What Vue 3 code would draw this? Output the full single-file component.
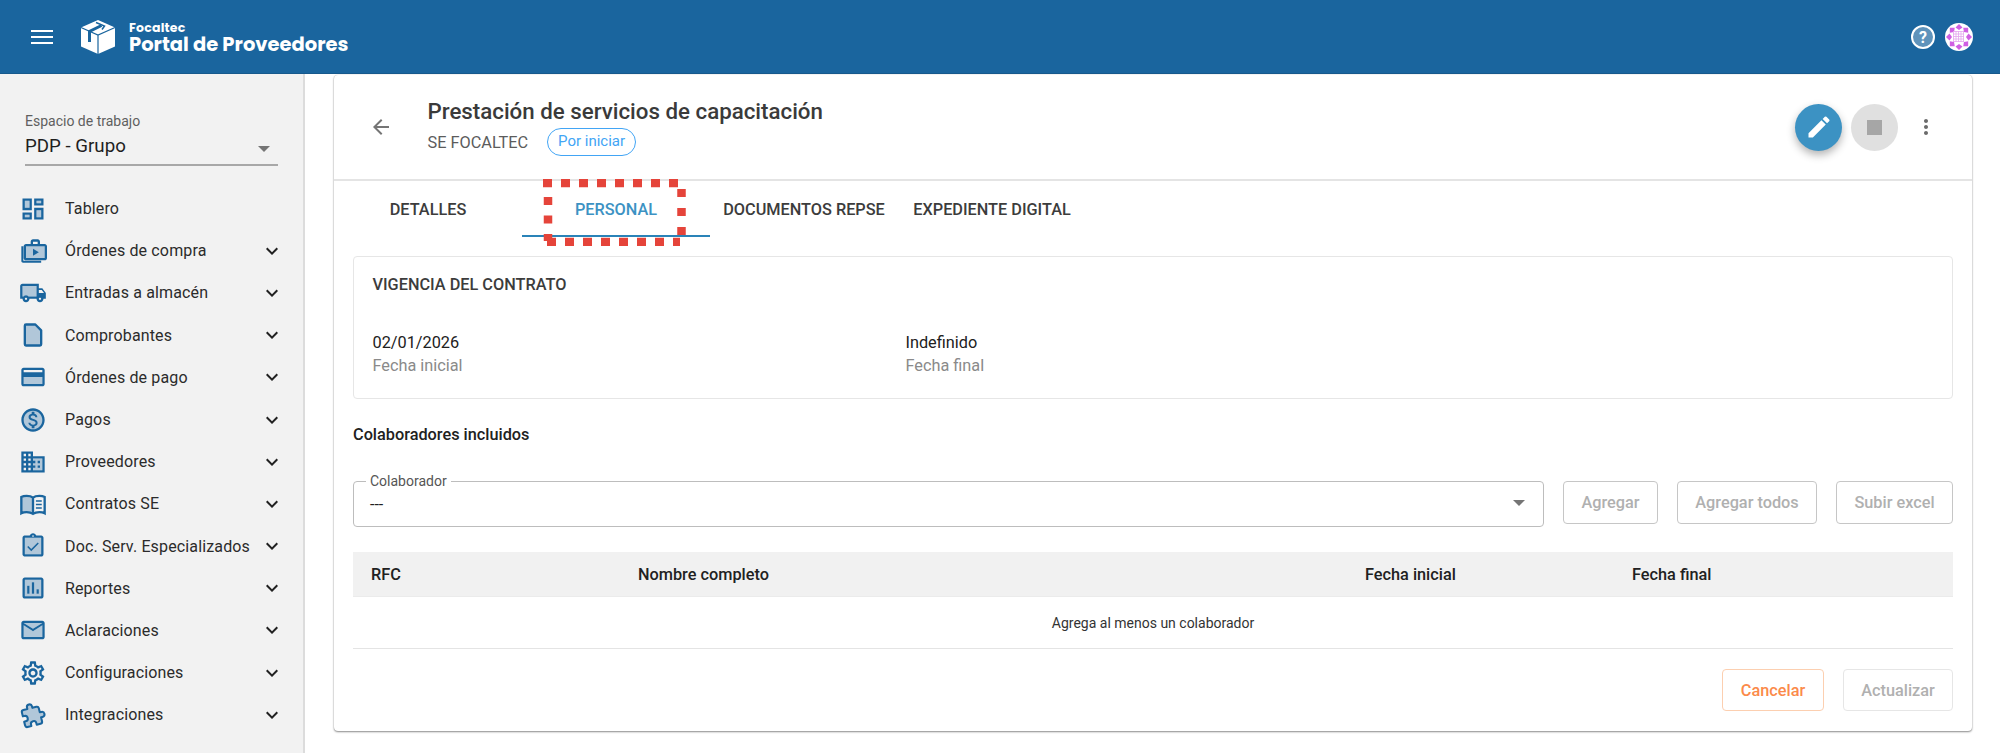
<script setup>
const nav = [
  { label: 'Tablero', icon: 'dash', leaf: true },
  { label: 'Órdenes de compra', icon: 'work' },
  { label: 'Entradas a almacén', icon: 'truck' },
  { label: 'Comprobantes', icon: 'doc' },
  { label: 'Órdenes de pago', icon: 'card' },
  { label: 'Pagos', icon: 'money' },
  { label: 'Proveedores', icon: 'domain' },
  { label: 'Contratos SE', icon: 'book' },
  { label: 'Doc. Serv. Especializados', icon: 'check' },
  { label: 'Reportes', icon: 'report' },
  { label: 'Aclaraciones', icon: 'mail' },
  { label: 'Configuraciones', icon: 'gear' },
  { label: 'Integraciones', icon: 'ext' }
]
const tabs = ['DETALLES', 'PERSONAL', 'DOCUMENTOS REPSE', 'EXPEDIENTE DIGITAL']
const cols = ['RFC', 'Nombre completo', 'Fecha inicial', 'Fecha final']
const petals = [0, 45, 90, 135, 180, 225, 270, 315]
const grid = [6.500, 9, 11.500, 14, 16.500]
</script>

<template>
  <div class="page">
    <header class="topbar">
      <svg class="burger" viewBox="0 0 22 14" width="22" height="14"><path d="M0 1h22M0 7h22M0 13h22" stroke="#fff" stroke-width="2"/></svg>
      <svg class="logo" viewBox="0 0 36 36" width="36" height="36">
        <path d="M18 1 35 8.500v19L18 35 1 27.500v-19z" fill="#fff"/>
        <path d="M1 8.500 18 16 35 8.500M18 16v19" stroke="#1a659e" stroke-width="1.200" fill="none"/>
        <path d="M9.500 23V12.500L21.500 6.500" stroke="#1a659e" stroke-width="3" fill="none"/>
        <path d="M16 3.500 24.500 7 22 10.500" stroke="#1a659e" stroke-width="1.500" fill="none"/>
      </svg>
      <div class="brand">
        <div class="brand-small">Focaltec</div>
        <div class="brand-big">Portal de Proveedores</div>
      </div>
      <div class="top-right">
        <svg viewBox="0 0 24 24" width="24" height="24">
          <circle cx="12" cy="12" r="11" fill="#fff" fill-opacity=".3" stroke="#fff" stroke-width="2"/>
          <text x="12" y="17.500" text-anchor="middle" class="q">?</text>
        </svg>
        <svg viewBox="0 0 28 28" width="28" height="28">
          <circle cx="14" cy="14" r="14" fill="#fff"/>
          <g transform="translate(2 2)">
            <path v-for="a in petals" :key="a" :transform="`rotate(${a} 12 12)`" d="M12 -1 15.500 2.500 12 5 8.500 2.500z" fill="#cf5fe3"/>
            <path v-for="g in grid" :key="'v' + g" :d="`M${g} 6V17M6 ${g}H17`" stroke="#e3a6ef" stroke-width=".8"/>
          </g>
        </svg>
      </div>
    </header>

    <div class="body">
      <aside class="sidebar">
        <div class="workspace">
          <div class="ws-label">Espacio de trabajo</div>
          <div class="ws-value">
            <span>PDP - Grupo</span>
            <i class="caret"></i>
          </div>
        </div>
        <nav class="nav">
          <div v-for="item in nav" :key="item.label" class="nav-row">
            <svg class="nav-icon" viewBox="0 0 24 24" width="28" height="28">
              <template v-if="item.icon === 'dash'">
                <path class="tone" d="M5 5h4v6H5zm10 8h4v6h-4zM5 17h4v2H5zM15 5h4v2h-4z"/>
                <path d="M3 13h8V3H3v10zm2-8h4v6H5V5zm8 16h8V11h-8v10zm2-8h4v6h-4v-6zM13 3v6h8V3h-8zm6 4h-4V5h4v2zM3 21h8v-6H3v6zm2-4h4v2H5v-2z"/>
              </template>
              <template v-else-if="item.icon === 'work'">
                <path class="tone" d="M6 7h16v11H6z"/>
                <path d="M2 8v12.500c0 .8.7 1.500 1.500 1.500H19v-1.700H3.700V8zM22 6h-4V4c0-1-.9-2-2-2h-4c-1.100 0-2 1-2 2v2H6c-1.100 0-2 .9-2 2v10c0 1.100.9 2 2 2h16c1.100 0 2-.9 2-2V8c0-1.100-.9-2-2-2zM12 4h4v2h-4zm10 14H6V8h16z"/>
                <path d="M12 10v6l5-3z"/>
              </template>
              <template v-else-if="item.icon === 'truck'">
                <path class="tone" d="M3 6h12v9H8.200C7.700 14.400 6.900 14 6 14s-1.700.4-2.200 1H3z"/>
                <path d="M20 8h-3V4H3c-1.100 0-2 .9-2 2v11h2c0 1.660 1.340 3 3 3s3-1.340 3-3h6c0 1.660 1.340 3 3 3s3-1.340 3-3h2v-5l-3-4zm-.5 1.500 1.960 2.500H17V9.500h2.500zM6 18c-.55 0-1-.45-1-1s.45-1 1-1 1 .45 1 1-.45 1-1 1zm2.220-3c-.55-.61-1.330-1-2.220-1s-1.670.39-2.220 1H3V6h12v9H8.220zM18 18c-.55 0-1-.45-1-1s.45-1 1-1 1 .45 1 1-.45 1-1 1z"/>
              </template>
              <template v-else-if="item.icon === 'doc'">
                <path class="tone stroked" d="M6 3h8l5 5v12a1 1 0 0 1-1 1H6a1 1 0 0 1-1-1V4a1 1 0 0 1 1-1z"/>
              </template>
              <template v-else-if="item.icon === 'card'">
                <path class="tone" d="M4 12h16v6H4z"/>
                <path d="M20 4H4c-1.110 0-1.990.89-1.990 2L2 18c0 1.110.89 2 2 2h16c1.110 0 2-.89 2-2V6c0-1.110-.89-2-2-2zm0 14H4v-6h16v6zm0-10H4V6h16v2z"/>
              </template>
              <template v-else-if="item.icon === 'money'">
                <circle class="tone" cx="12" cy="12" r="9"/>
                <path d="M12 2C6.480 2 2 6.480 2 12s4.480 10 10 10 10-4.480 10-10S17.520 2 12 2zm0 18c-4.410 0-8-3.590-8-8s3.590-8 8-8 8 3.590 8 8-3.590 8-8 8z"/>
                <path d="M12.310 11.140c-1.770-.45-2.340-.94-2.340-1.670 0-.84.79-1.430 2.100-1.430 1.380 0 1.900.66 1.940 1.640h1.710c-.05-1.340-.87-2.570-2.490-2.970V5H10.900v1.690c-1.510.32-2.720 1.300-2.720 2.810 0 1.790 1.490 2.690 3.660 3.210 1.950.46 2.340 1.150 2.340 1.870 0 .53-.39 1.390-2.100 1.390-1.600 0-2.230-.72-2.320-1.640H8.040c.1 1.700 1.360 2.660 2.860 2.970V19h2.340v-1.670c1.520-.29 2.720-1.160 2.730-2.770-.01-2.200-1.900-2.960-3.660-3.420z"/>
              </template>
              <template v-else-if="item.icon === 'domain'">
                <path class="tone" d="M12 9h8v10h-8z"/>
                <path d="M12 7V3H2v18h20V7H12zM6 19H4v-2h2v2zm0-4H4v-2h2v2zm0-4H4V9h2v2zm0-4H4V5h2v2zm4 12H8v-2h2v2zm0-4H8v-2h2v2zm0-4H8V9h2v2zm0-4H8V5h2v2zm10 12h-8v-2h2v-2h-2v-2h2v-2h-2V9h8v10zm-2-8h-2v2h2v-2zm0 4h-2v2h2v-2z"/>
              </template>
              <template v-else-if="item.icon === 'book'">
                <path class="tone" d="M12 6.500C10.500 5.300 8.500 5 6.500 5 4.800 5 3.200 5.300 2 6v14c1.300-.7 2.900-1 4.500-1 2 0 4 .4 5.500 1.500z"/>
                <path class="line" d="M12 6.500C10.500 5.300 8.500 5 6.500 5 4.800 5 3.200 5.300 2 6v14c1.300-.7 2.900-1 4.500-1 2 0 4 .4 5.500 1.500 1.500-1.100 3.500-1.500 5.500-1.500 1.600 0 3.200.3 4.500 1V6c-1.200-.7-2.800-1-4.500-1-2 0-4 .3-5.500 1.500zM12 6.500v14"/>
                <path class="line thin" d="M14.500 9.500h5M14.500 12.500h5M14.500 15.500h5"/>
              </template>
              <template v-else-if="item.icon === 'check'">
                <path class="tone" d="M5 5h14v14H5z"/>
                <path d="M19 3h-4.180C14.400 1.840 13.300 1 12 1c-1.300 0-2.400.84-2.820 2H5c-.14 0-.27.01-.4.04-.39.08-.74.28-1.010.55-.18.18-.33.4-.43.64-.1.23-.16.49-.16.77v14c0 .27.06.54.16.78s.25.45.43.64c.27.27.62.47 1.010.55.13.02.26.03.4.03h14c1.100 0 2-.9 2-2V5c0-1.100-.9-2-2-2zm-7-.25c.41 0 .75.34.75.75s-.34.75-.75.75-.75-.34-.75-.75.34-.75.75-.75zM19 19H5V5h14v14z"/>
                <path class="line thin" d="m7.500 12.500 3 3 6-6"/>
              </template>
              <template v-else-if="item.icon === 'report'">
                <path class="tone" d="M5 5v14h14V5H5zm4 12H7v-7h2v7zm4 0h-2V7h2v10zm4 0h-2v-4h2v4z"/>
                <path d="M3 5v14c0 1.100.9 2 2 2h14c1.100 0 2-.9 2-2V5c0-1.100-.9-2-2-2H5c-1.100 0-2 .9-2 2zm2 0h14v14H5V5zm2 5h2v7H7zm4-3h2v10h-2zm4 6h2v4h-2z"/>
              </template>
              <template v-else-if="item.icon === 'mail'">
                <path class="tone" d="M20 6H4l8 4.990zM4 8v10h16V8l-8 5z"/>
                <path d="M20 4H4c-1.100 0-2 .9-2 2v12c0 1.100.9 2 2 2h16c1.100 0 2-.9 2-2V6c0-1.100-.9-2-2-2zm0 2-8 4.990L4 6h16zm0 12H4V8l8 5 8-5v10z"/>
              </template>
              <template v-else-if="item.icon === 'gear'">
                <path d="M19.430 12.980c.04-.32.07-.64.07-.98 0-.34-.03-.66-.07-.98l2.110-1.650c.19-.15.24-.42.12-.64l-2-3.460c-.09-.16-.26-.25-.44-.25-.06 0-.12.01-.17.03l-2.490 1c-.52-.4-1.080-.73-1.690-.98l-.38-2.650C14.460 2.180 14.250 2 14 2h-4c-.25 0-.46.18-.49.42l-.38 2.650c-.61.25-1.170.59-1.690.98l-2.490-1c-.06-.02-.12-.03-.18-.03-.17 0-.34.09-.43.25l-2 3.460c-.13.22-.07.49.12.64l2.110 1.650c-.04.32-.07.65-.07.98 0 .33.03.66.07.98l-2.110 1.650c-.19.15-.24.42-.12.64l2 3.460c.09.16.26.25.44.25.06 0 .12-.01.17-.03l2.490-1c.52.4 1.080.73 1.690.98l.38 2.650c.03.24.24.42.49.42h4c.25 0 .46-.18.49-.42l.38-2.650c.61-.25 1.170-.59 1.690-.98l2.490 1c.06.02.12.03.18.03.17 0 .34-.09.43-.25l2-3.460c.12-.22.07-.49-.12-.64l-2.110-1.650zm-1.980-1.710c.04.31.05.52.05.73 0 .21-.02.43-.05.73l-.14 1.130.89.7 1.080.84-.7 1.210-1.270-.51-1.040-.42-.9.68c-.43.32-.84.56-1.250.73l-1.060.43-.16 1.130-.2 1.350h-1.400l-.19-1.350-.16-1.130-1.060-.43c-.43-.18-.83-.41-1.230-.71l-.91-.7-1.060.43-1.270.51-.7-1.210 1.080-.84.89-.7-.14-1.130c-.03-.31-.05-.54-.05-.74s.02-.43.05-.73l.14-1.130-.89-.7-1.080-.84.7-1.210 1.270.51 1.040.42.9-.68c.43-.32.84-.56 1.250-.73l1.060-.43.16-1.130.2-1.350h1.390l.19 1.350.16 1.130 1.060.43c.43.18.83.41 1.230.71l.91.7 1.060-.43 1.270-.51.7 1.210-1.070.85-.89.7.14 1.130zM12 8c-2.210 0-4 1.790-4 4s1.790 4 4 4 4-1.790 4-4-1.790-4-4-4zm0 6c-1.100 0-2-.9-2-2s.9-2 2-2 2 .9 2 2-.9 2-2 2z"/>
              </template>
              <template v-else>
                <path class="tone stroked" transform="rotate(-14 12 12) translate(1.500 1.500) scale(.88)" d="M20.500 11H19V7c0-1.100-.9-2-2-2h-4V3.500C13 2.120 11.880 1 10.500 1S8 2.120 8 3.500V5H4c-1.100 0-1.990.9-1.990 2v3.800H3.500c1.490 0 2.700 1.210 2.700 2.700s-1.210 2.700-2.700 2.700H2V20c0 1.100.9 2 2 2h3.800v-1.500c0-1.490 1.210-2.700 2.700-2.700 1.490 0 2.700 1.210 2.700 2.700V22H17c1.100 0 2-.9 2-2v-4h1.500c1.380 0 2.500-1.120 2.500-2.500S21.880 11 20.500 11z"/>
              </template>
            </svg>
            <span class="nav-label">{{ item.label }}</span>
            <svg v-if="!item.leaf" class="chev" viewBox="0 0 24 24" width="24" height="24"><path d="M16.590 8.590 12 13.170 7.410 8.590 6 10l6 6 6-6z"/></svg>
          </div>
        </nav>
      </aside>

      <main class="main">
        <section class="card">
          <div class="card-head">
            <svg class="back" viewBox="0 0 24 24" width="24" height="24"><path d="M20 11H7.830l5.590-5.590L12 4l-8 8 8 8 1.410-1.410L7.830 13H20z"/></svg>
            <div class="head-text">
              <h1>Prestación de servicios de capacitación</h1>
              <div class="sub">
                <span>SE FOCALTEC</span>
                <span class="chip">Por iniciar</span>
              </div>
            </div>
            <div class="head-actions">
              <button class="fab edit">
                <svg viewBox="0 0 24 24" width="28" height="28"><path fill="#fff" d="M3 17.250V21h3.750L17.810 9.940l-3.750-3.750L3 17.250zM20.710 7.040a.996.996 0 0 0 0-1.410l-2.340-2.340a.996.996 0 0 0-1.410 0l-1.830 1.830 3.750 3.750 1.830-1.830z"/></svg>
              </button>
              <button class="fab stop"><i></i></button>
              <svg class="more" viewBox="0 0 24 24" width="24" height="24"><path d="M12 8c1.100 0 2-.9 2-2s-.9-2-2-2-2 .9-2 2 .9 2 2 2zm0 2c-1.100 0-2 .9-2 2s.9 2 2 2 2-.9 2-2-.9-2-2-2zm0 6c-1.100 0-2 .9-2 2s.9 2 2 2 2-.9 2-2-.9-2-2-2z"/></svg>
            </div>
          </div>

          <div class="tabs">
            <div v-for="(t, i) in tabs" :key="t" class="tab" :class="{ active: i === 1 }">{{ t }}</div>
            <div class="marker"></div>
            <svg class="callout" viewBox="0 0 143 67" width="143" height="67">
              <path d="M0 4H137" stroke-dasharray="9 9"/>
              <path d="M4 63H137" stroke-dasharray="9 9"/>
              <path d="M5 18V62" stroke-dasharray="8 10.500"/>
              <path d="M138.500 10V58" stroke-dasharray="8 11"/>
            </svg>
          </div>

          <div class="content">
            <div class="panel">
              <div class="panel-title">VIGENCIA DEL CONTRATO</div>
              <div class="dates">
                <div><div class="val">02/01/2026</div><div class="cap">Fecha inicial</div></div>
                <div><div class="val">Indefinido</div><div class="cap">Fecha final</div></div>
              </div>
            </div>

            <div class="section-title">Colaboradores incluidos</div>

            <div class="picker">
              <div class="combo">
                <span class="legend">Colaborador</span>
                <span>---</span>
                <i class="caret"></i>
              </div>
              <button class="btn w95">Agregar</button>
              <button class="btn w140">Agregar todos</button>
              <button class="btn w117">Subir excel</button>
            </div>

            <div class="table">
              <div class="thead"><div v-for="c in cols" :key="c">{{ c }}</div></div>
              <div class="tbody">Agrega al menos un colaborador</div>
            </div>

            <div class="footer">
              <button class="btn cancel">Cancelar</button>
              <button class="btn update">Actualizar</button>
            </div>
          </div>
        </section>
      </main>
    </div>
  </div>
</template>

<style>
html, body { margin: 0; background: #fff; overflow: hidden; }
</style>

<style scoped>
* { box-sizing: border-box; }
.page { width: 2000px; height: 753px; overflow: hidden; font-family: Roboto, "Liberation Sans", sans-serif; color: #212121; background: #fff; }

.topbar { height: 74px; background: #1a659e; border-bottom: 1px solid #17598c; display: flex; align-items: center; padding: 0 27px 0 31px; }
.burger { flex: none; margin-right: 27px; }
.logo { flex: none; margin-right: 13px; }
.brand { color: #fff; font-family: Poppins, Inter, sans-serif; font-weight: 700; padding-top: 3px; }
.brand-small { font-size: 12.500px; line-height: 12px; letter-spacing: .2px; }
.brand-big { font-size: 19.500px; line-height: 21px; }
.top-right { margin-left: auto; display: flex; align-items: center; gap: 10px; }
.q { font: 700 16px Roboto, sans-serif; fill: #fff; }

.body { display: flex; height: 679px; }
.sidebar { width: 305px; flex: none; background: #f2f2f2; border-right: 2px solid #dcdcdc; }
.workspace { padding: 39px 25px 0; }
.ws-label { font-size: 14px; line-height: 16px; color: #5f5f5f; }
.ws-value { margin-top: 5px; height: 32px; padding-bottom: 6px; border-bottom: 2px solid #a8a8a8; display: flex; align-items: center; justify-content: space-between; font-size: 18.700px; color: #1f1f1f; }
.caret { width: 0; height: 0; border-left: 6px solid transparent; border-right: 6px solid transparent; border-top: 6px solid #757575; }
.ws-value .caret { margin-right: 8px; margin-top: 6px; }
.nav { margin-top: 21.500px; }
.nav-row { height: 42.200px; display: flex; align-items: center; padding: 0 19px; }
.nav-icon { flex: none; fill: #1a659e; }
.tone { fill: #1a659e; fill-opacity: .3; }
.stroked { stroke: #1a659e; stroke-width: 2; stroke-linejoin: round; }
.line { fill: none; stroke: #1a659e; stroke-width: 2; }
.thin { stroke-width: 1.300; }
.nav-label { margin-left: 18px; font-size: 16px; letter-spacing: .14px; white-space: nowrap; color: #2b2b2b; }
.chev { margin-left: auto; flex: none; fill: #212121; }

.main { flex: 1; padding: 1px 28px 0 29px; }
.card { background: #fff; height: 656px; border-radius: 4px; box-shadow: 0 1px 2px rgba(0, 0, 0, .45), 0 0 1px rgba(0, 0, 0, .25); }
.card-head { height: 106px; border-bottom: 2px solid #e4e4e4; display: flex; align-items: center; padding: 0 34px 0 34.500px; }
.back { fill: #757575; flex: none; }
.head-text { margin-left: 35px; padding-bottom: 2.500px; }
h1 { margin: 0; font-size: 22.300px; line-height: 30px; font-weight: 500; color: #3a3a3a; }
.sub { display: flex; align-items: center; gap: 19px; margin-top: 2.500px; font-size: 16.300px; color: #5c5c5c; }
.chip { height: 28px; padding: 0 10px; border: 1.500px solid #42a5f5; border-radius: 14px; color: #42a5f5; font-size: 15px; line-height: 25px; }
.head-actions { margin-left: auto; display: flex; align-items: center; gap: 9px; }
.fab { width: 47px; height: 47px; border-radius: 50%; border: 0; padding: 0; display: flex; align-items: center; justify-content: center; }
.edit { background: #3c92c3; box-shadow: 0 4px 8px rgba(0, 0, 0, .3); }
.stop { background: #e0e0e0; }
.stop i { width: 15px; height: 15px; background: #a6a6a6; }
.more { fill: #6b6b6b; margin-left: 7px; }

.tabs { position: relative; display: flex; height: 55px; }
.tab { width: 188px; flex: none; display: flex; align-items: center; justify-content: center; font-size: 16.300px; font-weight: 500; color: #3c3c3c; white-space: nowrap; padding-top: 2px; }
.tab.active { color: #3c92c3; }
.marker { position: absolute; left: 188px; width: 188px; bottom: -1px; height: 2px; background: #2a83b8; }
.callout { position: absolute; left: 209px; top: -2px; fill: none; stroke: #e5443a; stroke-width: 8.500; }

.content { padding: 20px 19px 0; }
.panel { height: 143px; border: 1.500px solid #e6e6e6; border-radius: 4px; padding: 19px 18.500px 0; }
.panel-title { font-size: 16.300px; line-height: 18px; font-weight: 500; color: #3c3c3c; }
.dates { margin-top: 39px; display: grid; grid-template-columns: 533px 1fr; font-size: 16.300px; line-height: 20px; }
.val { color: #212121; margin-bottom: 3px; }
.cap { color: #8a8a8a; }

.section-title { margin-top: 26px; font-size: 16.300px; line-height: 20px; font-weight: 500; color: #212121; }
.picker { margin-top: 36px; display: flex; align-items: flex-start; gap: 19px; }
.combo { position: relative; flex: 1; height: 46px; border: 1.500px solid #bdbdbd; border-radius: 4px; padding: 0 16px; display: flex; align-items: center; justify-content: space-between; font-size: 16px; }
.combo .caret { margin-right: 2px; margin-top: -3px; }
.legend { position: absolute; left: 12px; top: -8px; background: #fff; padding: 0 4px; font-size: 14px; line-height: 14px; color: #555; }
.btn { height: 43px; background: #fff; border: 1.500px solid #c6c6c6; border-radius: 4px; font: 500 16.300px Roboto, sans-serif; color: #b0b0b0; padding: 0; }
.w95 { width: 95px; }
.w140 { width: 140px; }
.w117 { width: 117px; }

.table { margin-top: 25px; }
.thead { height: 45px; background: #f1f1f1; border-bottom: 1px solid #ebebeb; display: grid; grid-template-columns: 267px 727px 267px 1fr; padding-left: 18px; align-items: center; font-size: 16.300px; font-weight: 500; color: #212121; }
.tbody { height: 52px; border-bottom: 1.500px solid #e4e4e4; display: flex; align-items: center; justify-content: center; font-size: 14px; color: #333; }

.footer { margin-top: 20px; display: flex; justify-content: flex-end; gap: 19px; }
.footer .btn { height: 42px; }
.cancel { width: 102px; border-color: #fccfb0; color: #fb8a4a; }
.update { width: 110px; border-color: #e6e6e6; }
</style>
